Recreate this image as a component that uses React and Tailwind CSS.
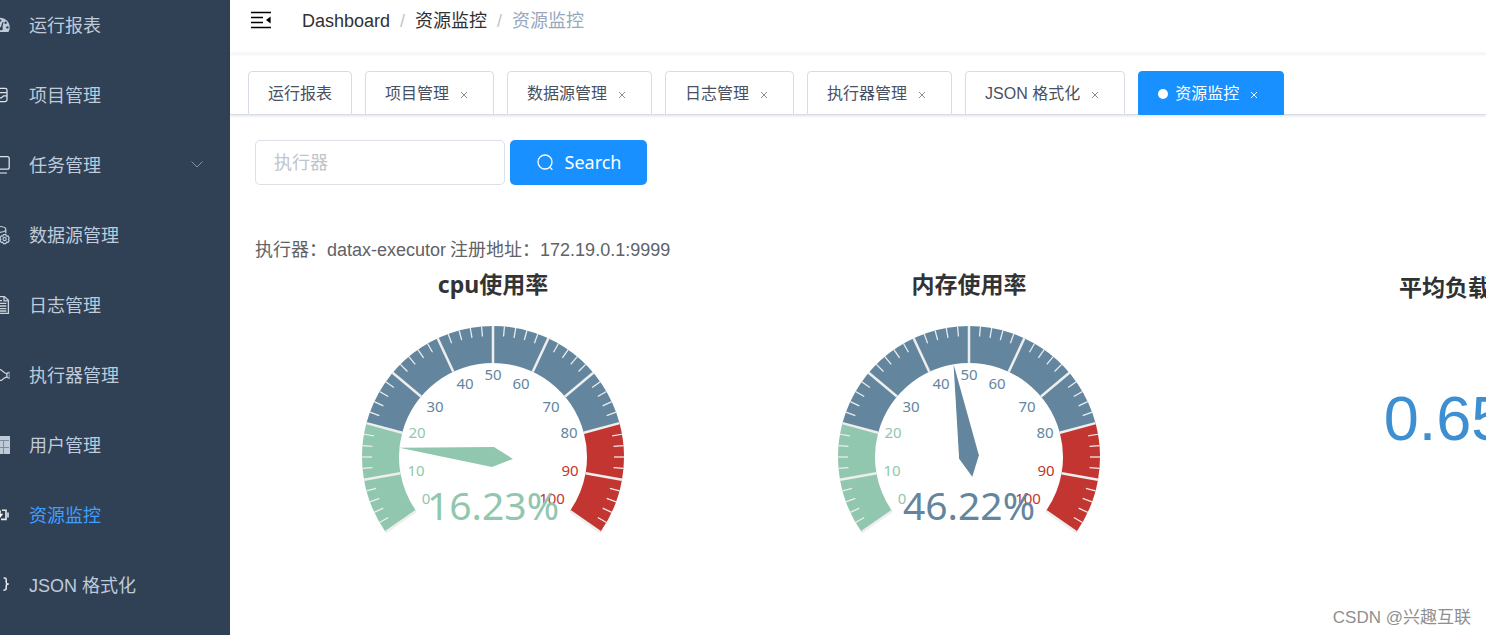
import React, { useState } from "react";

const TICK_START = 215;
const TICK_SWEEP = 250;
const OUTER = 131;
const INNER = 94;

const GREEN = "#91c7ae";
const BLUE = "#63869e";
const RED = "#c23531";

const menuItems = [
  { label: "运行报表", icon: "dashboard" },
  { label: "项目管理", icon: "project" },
  { label: "任务管理", icon: "task", hasChildren: true },
  { label: "数据源管理", icon: "datasource" },
  { label: "日志管理", icon: "log" },
  { label: "执行器管理", icon: "executor" },
  { label: "用户管理", icon: "table" },
  { label: "资源监控", icon: "monitor" },
  { label: "JSON 格式化", icon: "json" },
];

const tabs = [
  { label: "运行报表", fixed: true },
  { label: "项目管理" },
  { label: "数据源管理" },
  { label: "日志管理" },
  { label: "执行器管理" },
  { label: "JSON 格式化" },
  { label: "资源监控" },
];

// label centres, relative to the middle of the dial
const scaleLabels = [
  { text: "0", x: -67, y: 42 },
  { text: "10", x: -77, y: 14 },
  { text: "20", x: -76, y: -24 },
  { text: "30", x: -58, y: -50 },
  { text: "40", x: -28, y: -73 },
  { text: "50", x: 0, y: -82 },
  { text: "60", x: 28, y: -73 },
  { text: "70", x: 58, y: -50 },
  { text: "80", x: 76, y: -24 },
  { text: "90", x: 77, y: 14 },
  { text: "100", x: 59, y: 42 },
];

const menuIcons = {
  dashboard: (
    <>
      <path
        d="M0 -7.2C5.4 -7.2 9.7 -2.9 9.7 2.4C9.7 4.2 9.2 5.7 8.4 7H-8.4C-9.2 5.7 -9.7 4.2 -9.7 2.4C-9.7 -2.9 -5.4 -7.2 0 -7.2Z"
        fill="currentColor"
      />
      <g fill="#304156">
        <circle cx="0.4" cy="-4.4" r="1.1" />
        <circle cx="5.6" cy="-2.2" r="1.2" />
        <circle cx="7.4" cy="2.4" r="1.2" />
        <path d="M2.6 -3L3.6 -2.7L2.4 2.2C3.4 3.2 2.8 5.2 1 5.2C-1 5.2 -1 2.6 0.8 2Z" />
      </g>
    </>
  ),
  project: (
    <g fill="none" stroke="#dbe2ea" strokeWidth="1.3">
      <rect x="-9" y="-6.6" width="16" height="13.2" rx="1.8" />
      <path d="M-9 -2.4H7M-1.4 2.8H1.4L3.6 0.8H7" />
    </g>
  ),
  task: (
    <>
      <rect x="-9" y="-8.4" width="18.2" height="12.6" rx="2" fill="none" stroke="#dbe2ea" strokeWidth="1.3" />
      <path d="M-7 8H7" stroke="#8d9aaa" strokeWidth="2" />
    </>
  ),
  datasource: (
    <g fill="none" stroke="currentColor" strokeWidth="1.2">
      <path d="M-9 -7.6C-5 -9 4 -9 5.6 -6.6C6.4 -4.4 5 -3.4 0 -2.6M5.8 -6V-1.6" />
      <circle cx="4.6" cy="4" r="1.6" />
      <path d="M3.4 -0.4H5.8L6.4 1L8 0.9L9.2 3L8.4 4.2L9.2 5.4L8 7.4L6.4 7.2L5.8 8.6H3.4L2.8 7.2L1.2 7.4L0 5.4L0.8 4.2L0 3L1.2 0.9L2.8 1Z" />
    </g>
  ),
  log: (
    <g fill="none" stroke="#cdd3da" strokeWidth="1.3">
      <path d="M-6 -8.4H4.4L8.4 -4.6V8.4H-6Z" />
      <path d="M4 -8V-4.2H8M-4 -4.4H2M-4 -1.6H6.4M-4 1H6.4M-4 3.6H6.4M-4 6H6.4" />
    </g>
  ),
  executor: (
    <g fill="none" stroke="#cdd3da" strokeWidth="1.3">
      <path d="M-8 -5.4H0.6L4.6 -2.2L6.8 -1.4V2L4.6 2.8L1.4 5.4H-8" />
      <path d="M6.6 -1.4L9.6 -2.8M6.6 2L9.6 3.4" />
      <path d="M9.2 -3V4" stroke="#78879a" />
    </g>
  ),
  table: (
    <>
      <rect x="-10" y="-9" width="20" height="18" fill="#7d8b9c" />
      <g fill="currentColor">
        <rect x="-10" y="-9" width="20" height="4" />
        <rect x="-4" y="-4" width="7" height="6" />
        <rect x="4" y="-4" width="5" height="6" />
        <rect x="-4" y="3" width="7" height="6" />
        <rect x="4" y="3" width="5" height="6" />
        <rect x="9" y="-9" width="1" height="18" />
      </g>
    </>
  ),
  monitor: (
    <>
      <path d="M2 -4.8H6V4.4H1" fill="none" stroke="#e6ebf0" strokeWidth="1.6" />
      <path d="M7 -2.4H9V2.6H7Z" fill="#b9c3ce" />
      <path d="M1 -5.4L-3 0.8H-0.6L-1.4 5L3.2 -1.2H0.6Z" fill="#fff" />
    </>
  ),
  json: (
    <path
      d="M3.6 -7H4.6C5.8 -7 6.2 -6.4 6.2 -5.4V-3C6.2 -1.6 7 -1 8.8 -1C7 -1 6.2 -0.4 6.2 1V3.6C6.2 4.8 5.6 5.2 3.4 5.2"
      fill="none"
      stroke="#e6ebf0"
      strokeWidth="1.5"
    />
  ),
};

const polar = (radius, angle) => {
  const rad = (angle * Math.PI) / 180;
  return [radius * Math.cos(rad), -radius * Math.sin(rad)];
};

const angleOf = (value) => TICK_START - (value / 100) * TICK_SWEEP;

const colorOf = (value) => {
  if (value <= 20) return GREEN;
  if (value <= 80) return BLUE;
  return RED;
};

const bandPath = (from, to) => {
  const [x1, y1] = polar(OUTER, angleOf(from));
  const [x2, y2] = polar(OUTER, angleOf(to));
  const [x3, y3] = polar(INNER, angleOf(to));
  const [x4, y4] = polar(INNER, angleOf(from));
  const large = ((to - from) / 100) * TICK_SWEEP > 180 ? 1 : 0;
  return `M${x1} ${y1}A${OUTER} ${OUTER} 0 ${large} 1 ${x2} ${y2}L${x3} ${y3}A${INNER} ${INNER} 0 ${large} 0 ${x4} ${y4}Z`;
};

const Gauge = ({ title, value }) => {
  const angle = angleOf(value);
  const pointer = [
    polar(INNER, angle),
    polar(10, angle - 90),
    polar(-20, angle),
    polar(10, angle + 90),
  ];

  return (
    <section className="w-[476px] shrink-0 flex flex-col items-center">
      <h2 className="h-10 leading-10 text-[23px] font-bold text-[#333] font-['Noto_Sans','Noto_Sans_CJK_SC',sans-serif]">
        {title}
      </h2>
      <svg
        viewBox="-140 -140 280 240"
        className="w-[280px] h-[240px] mt-[13px] font-['Noto_Sans',sans-serif]"
        role="img"
        aria-label={title}
      >
        <path d={bandPath(0, 20)} fill={GREEN} />
        <path d={bandPath(20, 80)} fill={BLUE} />
        <path d={bandPath(80, 100)} fill={RED} />

        {Array.from({ length: 51 }, (_, i) => {
          const major = i % 5 === 0;
          const [x1, y1] = polar(OUTER, angleOf(i * 2));
          const [x2, y2] = polar(major ? INNER : OUTER - 10, angleOf(i * 2));
          return (
            <line
              key={i}
              x1={x1}
              y1={y1}
              x2={x2}
              y2={y2}
              stroke="#eee"
              strokeWidth={major ? 2.5 : 1.25}
            />
          );
        })}

        {scaleLabels.map((item) => (
          <text
            key={item.text}
            x={item.x}
            y={item.y + 5}
            textAnchor="middle"
            fontSize="15"
            fill={colorOf(Number(item.text))}
          >
            {item.text}
          </text>
        ))}

        <polygon points={pointer.map((p) => p.join(",")).join(" ")} fill={colorOf(value)} />
        <text x="0" y="63" textAnchor="middle" fontSize="39" fill={colorOf(value)}>
          {value}%
        </text>
      </svg>
    </section>
  );
};

const Sidebar = ({ active }) => (
  <aside className="w-[230px] shrink-0 bg-[#304156] overflow-hidden">
    <nav className="-mt-2.5 -ml-2.5">
      <ul>
        {menuItems.map((item) => (
          <li key={item.label}>
            <a
              href="#"
              className={`flex items-center h-[70px] pr-[27px] text-lg ${
                item.label === active ? "text-[#409eff]" : "text-[#bfcbd9]"
              }`}
            >
              <svg viewBox="-10 -10 20 20" className="w-5 h-5 mr-[19px] text-[#bfcbd9]" aria-hidden="true">
                {menuIcons[item.icon]}
              </svg>
              <span className="pt-0.5">{item.label}</span>
              {item.hasChildren && (
                <svg viewBox="0 0 12 8" className="w-3 h-2 ml-auto" fill="none" stroke="#8391a3" aria-hidden="true">
                  <path d="M0.5 0.5L6 6L11.5 0.5" />
                </svg>
              )}
            </a>
          </li>
        ))}
      </ul>
    </nav>
  </aside>
);

const Navbar = () => (
  <header className="flex items-center h-[53px] pl-5 pb-3 shadow-[0_1px_4px_rgba(0,21,41,0.08)]">
    <button type="button" aria-label="Toggle sidebar" className="w-[22px] h-5 mr-[30px]">
      <svg viewBox="0 0 22 20" className="w-[22px] h-5">
        <path d="M1 1.5H21M1 6.5H13M1 11.5H13M1 16.5H21" stroke="#000" strokeWidth="1.6" />
        <path d="M20.6 5.6V12.4L16 9Z" fill="#000" />
      </svg>
    </button>
    <nav className="flex items-center gap-2.5 text-lg">
      <a href="#" className="text-[#303133]">Dashboard</a>
      <span className="text-[#c0c4cc]">/</span>
      <a href="#" className="text-[#303133]">资源监控</a>
      <span className="text-[#c0c4cc]">/</span>
      <span className="text-[#97a8be]">资源监控</span>
    </nav>
  </header>
);

const TabsBar = ({ active, onSelect }) => (
  <div className="flex items-end gap-[13px] h-[62px] pl-[18px] border-b border-[#d8dce5] shadow-[0_1px_3px_rgba(0,0,0,0.12)]">
    {tabs.map((tab) => {
      const isActive = tab.label === active;
      return (
        <button
          key={tab.label}
          type="button"
          onClick={() => onSelect(tab.label)}
          className={`flex items-center h-11 pt-0.5 px-[19px] -mb-px border rounded-t text-base whitespace-nowrap ${
            isActive
              ? "bg-[#1890ff] border-[#1890ff] text-white"
              : "border-[#d8dce5] text-[#495060]"
          }`}
        >
          {isActive && <span className="w-2.5 h-2.5 mr-[7px] rounded-full bg-white" />}
          {tab.label}
          {!tab.fixed && (
            <svg
              viewBox="0 0 12 12"
              className="w-3 h-3 mt-0.5 ml-[9px] mr-1"
              fill="none"
              stroke={isActive ? "#fff" : "#8a8f99"}
              aria-hidden="true"
            >
              <path d="M3 3L9 9M9 3L3 9" />
            </svg>
          )}
        </button>
      );
    })}
  </div>
);

const App = () => {
  const [activeTab, setActiveTab] = useState("资源监控");
  const [keyword, setKeyword] = useState("");

  return (
    <div className="relative flex min-h-screen w-full overflow-hidden bg-white font-['Liberation_Sans','Noto_Sans_CJK_SC',sans-serif]">
      <Sidebar active="资源监控" />

      <div className="flex-1 min-w-0">
        <Navbar />
        <TabsBar active={activeTab} onSelect={setActiveTab} />

        <main className="pt-[25px] pl-[25px] overflow-hidden">
          <form className="flex gap-[5px]" onSubmit={(e) => e.preventDefault()}>
            <input
              type="text"
              aria-label="执行器"
              placeholder="执行器"
              value={keyword}
              onChange={(e) => setKeyword(e.target.value)}
              className="w-[250px] h-[45px] pt-0.5 px-[18px] text-lg text-[#606266] placeholder:text-[#c0c4cc] border border-[#dcdfe6] rounded-[5px] outline-none"
            />
            <button
              type="submit"
              className="flex items-center justify-center gap-[11px] w-[137px] h-[45px] pb-0.5 rounded-[5px] bg-[#1890ff] text-white text-lg font-['Noto_Sans',sans-serif]"
            >
              <svg viewBox="0 0 18 18" className="w-[18px] h-[18px]" fill="none" stroke="currentColor" strokeWidth="1.3">
                <circle cx="9" cy="9" r="7" />
                <path d="M14 14.4L16.4 16.8" />
              </svg>
              Search
            </button>
          </form>

          <p className="flex gap-1 mt-[51px] h-7 leading-7 text-lg text-[#606266]">
            <span>执行器：datax-executor</span>
            <span>注册地址：172.19.0.1:9999</span>
          </p>

          <div className="flex">
            <Gauge title="cpu使用率" value={16.23} />
            <Gauge title="内存使用率" value={46.22} />
            <section className="w-[476px] shrink-0 text-center">
              <h2 className="h-12 leading-[48px] text-[23px] font-bold text-[#303133]">平均负载</h2>
              <p className="mt-[70px] text-[63px] leading-[72px] text-[#3d8fd1]">0.65</p>
            </section>
          </div>
        </main>
      </div>

      <span className="absolute right-[15px] bottom-[5px] text-[17px] leading-6 text-[#8f8f8f]">
        CSDN @兴趣互联
      </span>
    </div>
  );
};

export default App;
